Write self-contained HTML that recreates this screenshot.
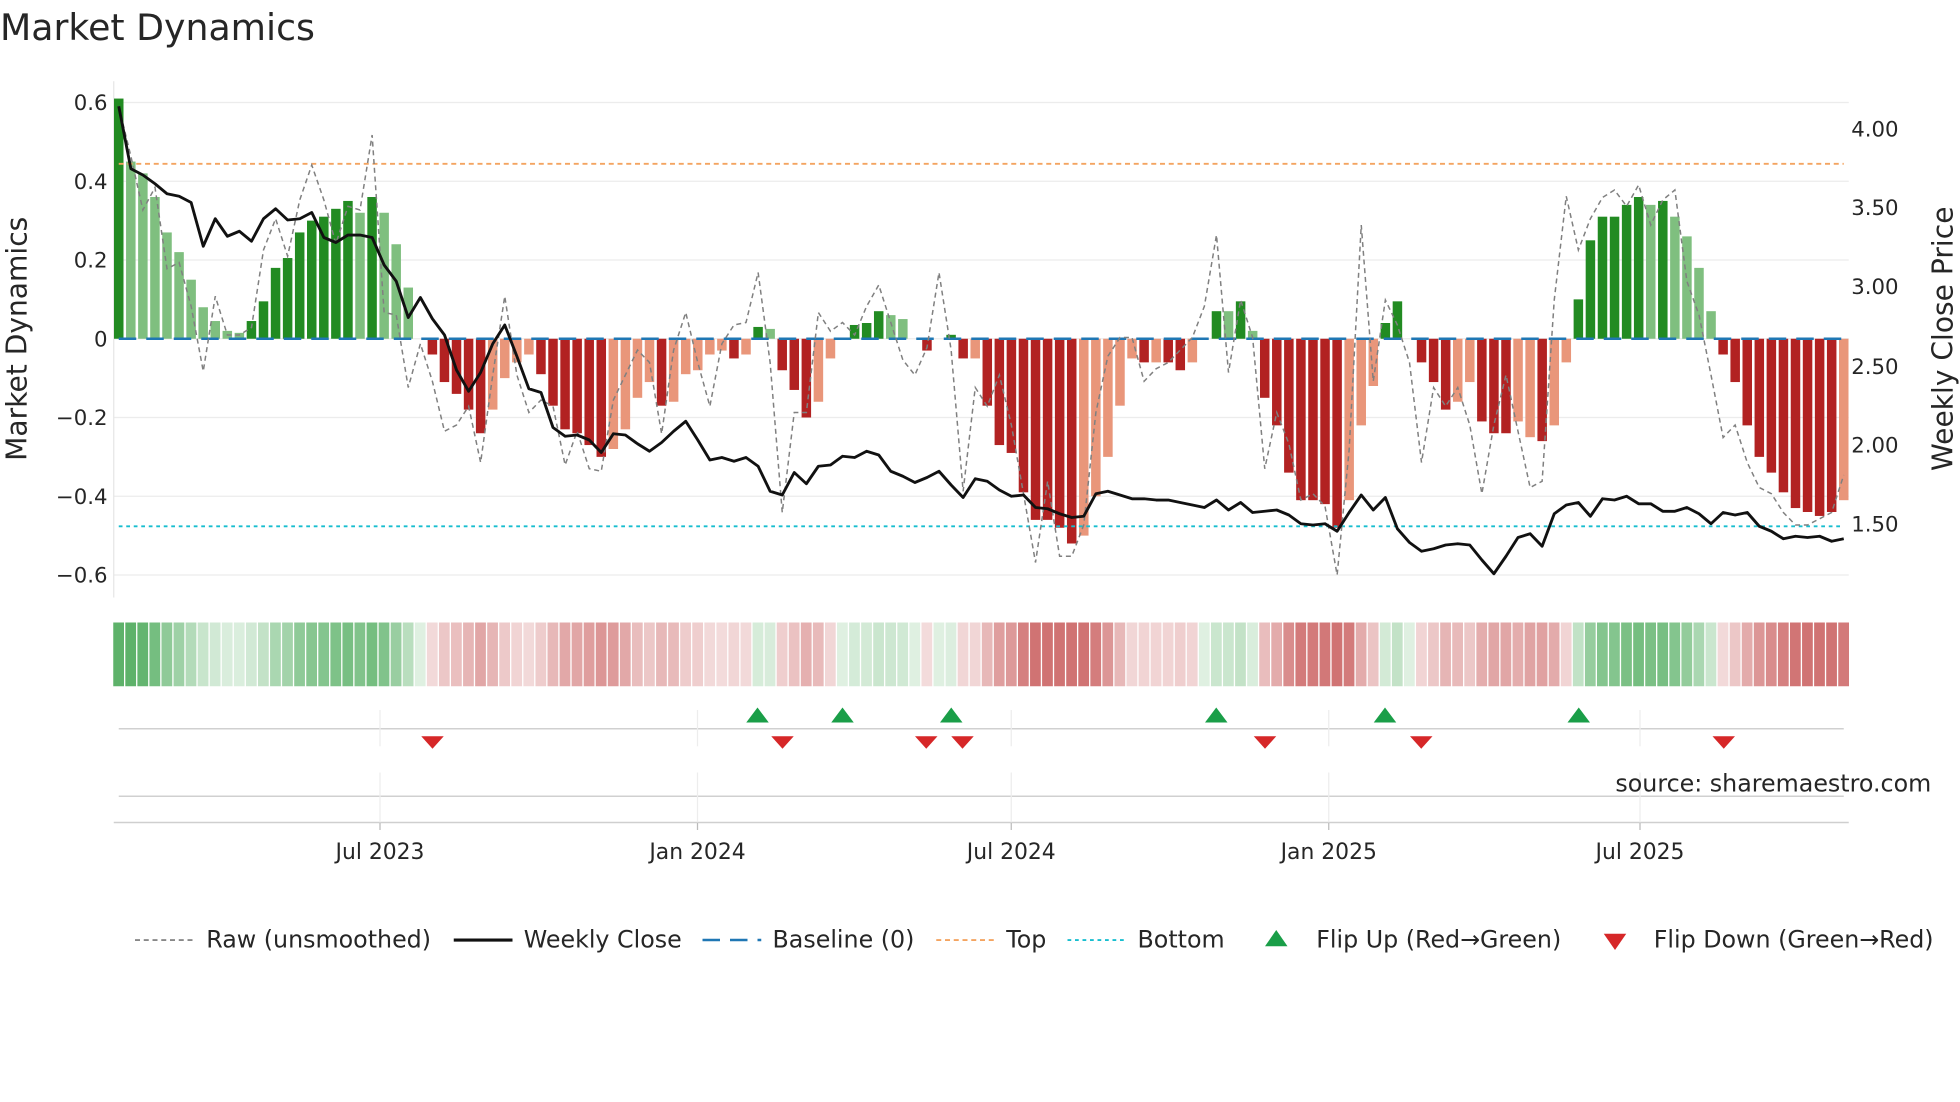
<!DOCTYPE html>
<html><head><meta charset="utf-8">
<style>
html,body{margin:0;padding:0;background:#fff;}
svg{display:block;}
text{font-family:"DejaVu Sans","Liberation Sans",sans-serif;fill:#262626;}
</style></head>
<body>
<svg id="s" width="1960" height="1102" viewBox="0 0 1568 881.6" xmlns="http://www.w3.org/2000/svg">
<text x="0" y="32" font-size="29" fill="#333">Market Dynamics</text>
<g id="grid"></g>
<g id="bars"></g>
<g id="strip"></g>
<g id="lines"></g>
<g id="marks"></g>
<g font-size="17" text-anchor="end">
<text x="86" y="88">0.6</text><text x="86" y="151">0.4</text><text x="86" y="214">0.2</text><text x="86" y="277">0</text><text x="86" y="340">−0.2</text><text x="86" y="403">−0.4</text><text x="86" y="466">−0.6</text>
</g>
<g font-size="17">
<text x="1481" y="109">4.00</text><text x="1481" y="172">3.50</text><text x="1481" y="235">3.00</text><text x="1481" y="299">2.50</text><text x="1481" y="362">2.00</text><text x="1481" y="425">1.50</text>
</g>
<text transform="translate(21,271) rotate(-90)" font-size="22.5" text-anchor="middle">Market Dynamics</text>
<text transform="translate(1562,271) rotate(-90)" font-size="22.5" text-anchor="middle">Weekly Close Price</text>
<g font-size="17.5" text-anchor="middle">
<text x="304" y="687">Jul 2023</text><text x="558" y="687">Jan 2024</text><text x="809" y="687">Jul 2024</text><text x="1063" y="687">Jan 2025</text><text x="1312" y="687">Jul 2025</text>
</g>
<text x="1545" y="633" font-size="19" text-anchor="end" fill="#9a9a9a">source: sharemaestro.com</text>
<g font-size="19">
<line x1="108" y1="752" x2="155" y2="752" stroke="#777" stroke-width="1.3" stroke-dasharray="4,3"/>
<text x="165" y="758">Raw (unsmoothed)</text>
<line x1="363" y1="752" x2="410" y2="752" stroke="#111" stroke-width="2.5"/>
<text x="419" y="758">Weekly Close</text>
<line x1="562" y1="752" x2="609" y2="752" stroke="#1f77b4" stroke-width="2" stroke-dasharray="14,8"/>
<text x="618" y="758">Baseline (0)</text>
<line x1="749" y1="752" x2="796" y2="752" stroke="#f4a460" stroke-width="1.5" stroke-dasharray="4,3"/>
<text x="805" y="758">Top</text>
<line x1="854" y1="752" x2="901" y2="752" stroke="#17becf" stroke-width="1.5" stroke-dasharray="3,3"/>
<text x="910" y="758">Bottom</text>
<polygon points="1012,757 1030,757 1021,744" fill="#1a9e48"/>
<text x="1053" y="758">Flip Up (Red→Green)</text>
<polygon points="1283,747 1301,747 1292,760" fill="#d62728"/>
<text x="1323" y="758">Flip Down (Green→Red)</text>
</g>
</svg>
<script>
var NS="http://www.w3.org/2000/svg";
function el(p,t,a){var e=document.createElementNS(NS,t);for(var k in a)e.setAttribute(k,a[k]);document.getElementById(p).appendChild(e);return e;}
[82,145,208,271,334,397,460].forEach(function(y){el('grid','line',{x1:91,x2:1479,y1:y,y2:y,stroke:'#ececec','stroke-width':1});});
el('grid','line',{x1:91,x2:91,y1:65,y2:478,stroke:'#e6e6e6','stroke-width':1});
el('grid','line',{x1:95,x2:1475,y1:583,y2:583,stroke:'#d0d0d0','stroke-width':1.2});
el('grid','line',{x1:95,x2:1475,y1:637,y2:637,stroke:'#d0d0d0','stroke-width':1.2});
el('grid','line',{x1:91,x2:1479,y1:658,y2:658,stroke:'#cfcfcf','stroke-width':1.2});
[304,558,809,1063,1312].forEach(function(x){
 el('grid','line',{x1:x,x2:x,y1:568,y2:597,stroke:'#ededed'});
 el('grid','line',{x1:x,x2:x,y1:618,y2:658,stroke:'#ededed'});
 el('grid','line',{x1:x,x2:x,y1:658,y2:664,stroke:'#bbb'});
});
var B=[[.61,1],[.45,0],[.42,0],[.36,0],[.27,0],[.22,0],[.15,0],[.08,0],[.045,0],[.02,0],[.015,0],[.045,1],[.095,1],[.18,1],[.205,1],[.27,1],[.30,1],[.31,1],[.33,1],[.35,1],[.32,0],[.36,1],[.32,0],[.24,0],[.13,0],[0,0],
[-.04,1],[-.11,1],[-.14,1],[-.18,1],[-.24,1],[-.18,0],[-.10,0],[-.06,0],[-.04,0],[-.09,1],[-.17,1],[-.23,1],[-.24,1],[-.27,1],[-.30,1],[-.28,0],[-.23,0],[-.15,0],[-.11,0],[-.17,1],[-.16,0],[-.09,0],[-.08,0],[-.04,0],[-.03,0],[-.05,1],[-.04,0],[.03,1],[.025,0],[-.08,1],[-.13,1],[-.20,1],[-.16,0],[-.05,0],[0,0],[.035,1],[.04,1],[.07,1],[.06,0],[.05,0],[0,0],[-.03,1],[0,0],[.01,1],[-.05,1],[-.05,0],[-.17,1],[-.27,1],[-.29,1],[-.39,1],[-.46,1],[-.46,1],[-.48,1],[-.52,1],[-.50,0],[-.40,0],[-.30,0],[-.17,0],[-.05,0],[-.06,1],[-.06,0],[-.06,1],[-.08,1],[-.06,0],[0,0],[.07,1],[.07,0],[.095,1],[.02,0],[-.15,1],[-.22,1],[-.34,1],[-.41,1],[-.41,1],[-.42,1],[-.48,1],[-.41,0],[-.22,0],[-.12,0],[.04,1],[.095,1],[0,0],[-.06,1],[-.11,1],[-.18,1],[-.16,0],[-.11,0],[-.21,1],[-.24,1],[-.24,1],[-.21,0],[-.25,0],[-.26,1],[-.22,0],[-.06,0],[.10,1],[.25,1],[.31,1],[.31,1],[.34,1],[.36,1],[.34,0],[.35,1],[.31,0],[.26,0],[.18,0],[.07,0],[-.04,1],[-.11,1],[-.22,1],[-.30,1],[-.34,1],[-.39,1],[-.43,1],[-.44,1],[-.45,1],[-.44,1],[-.41,0]];
var n=B.length, x0=95, x1=1475, dx=(x1-x0)/(n-1);
B.forEach(function(b,i){
 var x=x0+i*dx, v=b[0], h=Math.abs(v)*315, y=v>=0?271-h:271;
 var c=v>=0?(b[1]?'#228b22':'#7fbf7f'):(b[1]?'#b22222':'#e9967a');
 if(h>0.5) el('bars','rect',{x:x-3.8,y:y,width:7.6,height:h,fill:c});
 var a=Math.min(1,0.2+Math.abs(v)/0.55);
 var sc=v>=0?'rgba(76,170,90,'+(a*0.9)+')':'rgba(200,90,90,'+(a*0.85)+')';
 el('strip','rect',{x:x-4.4,y:498,width:8.6,height:51,fill:sc});
});
el('lines','line',{x1:95,x2:1475,y1:271,y2:271,stroke:'#1f77b4','stroke-width':2,'stroke-dasharray':'14,8'});
el('lines','line',{x1:95,x2:1475,y1:131,y2:131,stroke:'#f4a460','stroke-width':1.5,'stroke-dasharray':'4,3'});
el('lines','line',{x1:95,x2:1475,y1:421,y2:421,stroke:'#17becf','stroke-width':1.5,'stroke-dasharray':'3,3'});
var R=[85,125,168,150,215,210,245,297,237,268,268,262,200,175,205,160,132,160,195,165,168,108,250,252,310,275,305,345,340,325,370,300,237,300,330,320,325,372,345,375,377,320,300,280,290,347,280,250,290,325,275,260,258,218,290,410,330,330,250,265,258,268,245,228,258,288,300,278,218,280,393,310,325,300,340,395,450,385,445,445,420,330,285,270,270,305,295,290,280,270,245,188,298,240,270,375,330,355,400,395,405,460,360,180,305,240,260,290,370,310,325,310,340,395,340,300,345,390,385,240,157,200,175,158,152,165,148,180,160,152,225,252,300,350,340,370,390,395,410,420,420,415,410,380];
var P=[85,135,140,147,155,157,162,197,175,189,185,193,175,167,176,175,170,190,194,188,188,190,212,225,254,238,255,268,296,313,298,275,260,285,311,314,342,349,348,352,362,347,348,355,361,354,345,337,352,368,366,369,366,373,393,396,378,387,373,372,365,366,361,364,377,381,386,382,377,388,398,383,385,392,397,396,406,407,411,414,413,395,393,396,399,399,400,400,402,404,406,400,408,402,410,409,408,412,419,420,419,425,410,396,408,398,423,434,441,439,436,435,436,448,459,445,430,427,437,411,404,402,413,399,400,397,403,403,409,409,406,411,419,410,412,410,421,425,431,429,430,429,433,431];
function pts(A){var m=A.length,d=(x1-x0)/(m-1);return A.map(function(y,i){return (x0+i*d).toFixed(1)+','+y;}).join(' ');}
el('lines','polyline',{points:pts(R),fill:'none',stroke:'#808080','stroke-width':1.2,'stroke-dasharray':'4,3'});
el('lines','polyline',{points:pts(P),fill:'none',stroke:'#111','stroke-width':2.3,'stroke-linejoin':'round'});
[606,674,761,973,1108,1263].forEach(function(x){el('marks','polygon',{points:(x-9)+',578 '+(x+9)+',578 '+x+',566',fill:'#1a9e48'});});
[346,626,741,770,1012,1137,1379].forEach(function(x){el('marks','polygon',{points:(x-9)+',589 '+(x+9)+',589 '+x+',599',fill:'#d62728'});});
</script>
</body></html>
